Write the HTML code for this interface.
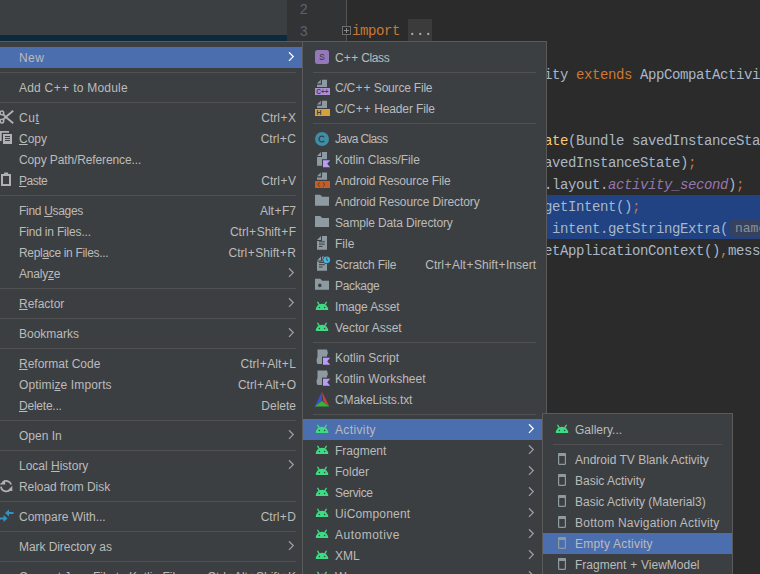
<!DOCTYPE html>
<html><head><meta charset="utf-8"><style>
html,body{margin:0;padding:0;width:760px;height:574px;overflow:hidden;background:#2B2B2B;position:relative}
body{font-family:"Liberation Sans",sans-serif}
.ln{position:absolute;left:287px;width:21px;text-align:right;height:22px;line-height:22px;font-family:"Liberation Mono",monospace;font-size:14px;color:#606366;padding-top:2px}
.code{position:absolute;left:352px;height:22px;line-height:22px;white-space:pre;font-family:"Liberation Mono",monospace;font-size:14px;letter-spacing:-0.4px;color:#A9B7C6;padding-top:1px}
.menu{position:absolute;background:#3C3F41;border:1px solid #5A5A5A;overflow:hidden}
.it{position:absolute;height:21px;line-height:21px;padding-top:1px;font-size:12px;color:#BBBBBB;white-space:nowrap}
.sc{position:absolute;height:21px;line-height:21px;padding-top:1px;font-size:12px;color:#BBBBBB;white-space:nowrap}
.sep{position:absolute;height:1px;background:#515151}
.hl{position:absolute;height:21px;background:#4B6EAF}
.arr{position:absolute}
.p{margin:0 0.5px}
u{text-decoration:underline;text-underline-offset:1px}
#icons{position:absolute;left:0;top:0;z-index:100}
</style></head><body>
<div style="position:absolute;left:0;top:0;width:287px;height:41px;background:#3C3F41"></div><div style="position:absolute;left:0;top:35px;width:287px;height:6px;background:#0D293E"></div><div style="position:absolute;left:287px;top:0;width:60px;height:574px;background:#313335"></div><div style="position:absolute;left:346px;top:0;width:1px;height:574px;background:#555555"></div><div class="ln" style="top:-3px">2</div><div class="ln" style="top:19px">3</div><div style="position:absolute;left:408px;top:19px;width:24px;height:22px;background:#3B3B3B"></div><div style="position:absolute;left:347px;top:195px;width:413px;height:44px;background:#214283"></div><div class="code" style="top:19px"><span style="color:#CC7832">import</span> <span style="color:#A9B7C6">...</span></div><div class="code" style="top:63px"><span style="color:#CC7832">public class </span><span style="color:#A9B7C6">SecondActivity </span><span style="color:#CC7832">extends </span><span style="color:#A9B7C6">AppCompatActivity {</span></div><div class="code" style="top:107px"><span style="color:#BBB529">    @Override</span></div><div class="code" style="top:129px"><span style="color:#CC7832">    protected void </span><span style="color:#FFC66D">onCreate</span><span style="color:#A9B7C6">(Bundle savedInstanceState) {</span></div><div class="code" style="top:151px"><span style="color:#CC7832">        super</span><span style="color:#A9B7C6">.onCreate(savedInstanceState)</span><span style="color:#CC7832">;</span></div><div class="code" style="top:173px"><span style="color:#A9B7C6">        setContentView(R.layout.</span><span style="color:#9876AA;font-style:italic">activity_second</span><span style="color:#A9B7C6">)</span><span style="color:#CC7832">;</span></div><div class="code" style="top:195px"><span style="color:#A9B7C6">        Intent intent = getIntent()</span><span style="color:#CC7832">;</span></div><div class="code" style="top:217px"><span style="color:#A9B7C6">        String message = intent.getStringExtra(</span></div><div class="code" style="top:239px"><span style="color:#A9B7C6">        Toast.makeText(getApplicationContext()</span><span style="color:#CC7832">,</span><span style="color:#A9B7C6">message</span></div><div style="position:absolute;left:730px;top:219px;width:40px;height:18px;border-radius:5px;background:#35425F"></div><div style="position:absolute;left:735px;top:220px;height:18px;line-height:18px;font-family:'Liberation Mono',monospace;font-size:13px;color:#8E9196;white-space:pre">name:</div><div style="position:absolute;left:342px;top:26px;width:7px;height:7px;border:1px solid #6E6E6E;background:#2B2B2B"></div><div style="position:absolute;left:344px;top:30px;width:5px;height:1px;background:#8A8A8A"></div><div style="position:absolute;left:346px;top:28px;width:1px;height:5px;background:#8A8A8A"></div><div class="menu" style="left:-20px;top:41px;width:325px;height:543px;z-index:10"><div class="hl" style="left:0;top:5px;width:327px"></div><div class="it" style="left:38px;top:5px;letter-spacing:0.450px">New</div><svg class="arr" style="left:307px;top:10px" width="7" height="10" viewBox="0 0 7 10"><path d="M1 0.3 L5.2 4.6 L1 8.9" fill="none" stroke="#FFFFFF" stroke-width="1.3"/></svg><div class="sep" style="left:9px;top:30px;width:306px"></div><div class="it" style="left:38px;top:35px;letter-spacing:0.200px">Add C<span class="p">+</span><span class="p">+</span> to Module</div><div class="sep" style="left:9px;top:60px;width:306px"></div><div class="it" style="left:38px;top:65px;letter-spacing:0.550px">Cu<u>t</u></div><div class="sc" style="right:10px;top:65px">Ctrl<span class="p">+</span>X</div><div class="it" style="left:38px;top:86px;letter-spacing:0.000px"><u>C</u>opy</div><div class="sc" style="right:10px;top:86px">Ctrl<span class="p">+</span>C</div><div class="it" style="left:38px;top:107px;letter-spacing:-0.114px">Copy Path/Reference...</div><div class="it" style="left:38px;top:128px;letter-spacing:-0.500px"><u>P</u>aste</div><div class="sc" style="right:10px;top:128px">Ctrl<span class="p">+</span>V</div><div class="sep" style="left:9px;top:153px;width:306px"></div><div class="it" style="left:38px;top:158px;letter-spacing:-0.310px">Find <u>U</u>sages</div><div class="sc" style="right:10px;top:158px">Alt<span class="p">+</span>F7</div><div class="it" style="left:38px;top:179px;letter-spacing:-0.173px">Find in Files...</div><div class="sc" style="right:10px;top:179px">Ctrl<span class="p">+</span>Shift<span class="p">+</span>F</div><div class="it" style="left:38px;top:200px;letter-spacing:-0.328px">Repl<u>a</u>ce in Files...</div><div class="sc" style="right:10px;top:200px">Ctrl<span class="p">+</span>Shift<span class="p">+</span>R</div><div class="it" style="left:38px;top:221px;letter-spacing:-0.200px">Analy<u>z</u>e</div><svg class="arr" style="left:307px;top:226px" width="7" height="10" viewBox="0 0 7 10"><path d="M1 0.3 L5.2 4.6 L1 8.9" fill="none" stroke="#9DA0A8" stroke-width="1.3"/></svg><div class="sep" style="left:9px;top:246px;width:306px"></div><div class="it" style="left:38px;top:251px;letter-spacing:0.000px"><u>R</u>efactor</div><svg class="arr" style="left:307px;top:256px" width="7" height="10" viewBox="0 0 7 10"><path d="M1 0.3 L5.2 4.6 L1 8.9" fill="none" stroke="#9DA0A8" stroke-width="1.3"/></svg><div class="sep" style="left:9px;top:276px;width:306px"></div><div class="it" style="left:38px;top:281px;letter-spacing:0.000px">Bookmarks</div><svg class="arr" style="left:307px;top:286px" width="7" height="10" viewBox="0 0 7 10"><path d="M1 0.3 L5.2 4.6 L1 8.9" fill="none" stroke="#9DA0A8" stroke-width="1.3"/></svg><div class="sep" style="left:9px;top:306px;width:306px"></div><div class="it" style="left:38px;top:311px;letter-spacing:0.000px"><u>R</u>eformat Code</div><div class="sc" style="right:10px;top:311px">Ctrl<span class="p">+</span>Alt<span class="p">+</span>L</div><div class="it" style="left:38px;top:332px;letter-spacing:0.127px">Optimi<u>z</u>e Imports</div><div class="sc" style="right:10px;top:332px">Ctrl<span class="p">+</span>Alt<span class="p">+</span>O</div><div class="it" style="left:38px;top:353px;letter-spacing:-0.225px"><u>D</u>elete...</div><div class="sc" style="right:10px;top:353px">Delete</div><div class="sep" style="left:9px;top:378px;width:306px"></div><div class="it" style="left:38px;top:383px;letter-spacing:0.000px">Open In</div><svg class="arr" style="left:307px;top:388px" width="7" height="10" viewBox="0 0 7 10"><path d="M1 0.3 L5.2 4.6 L1 8.9" fill="none" stroke="#9DA0A8" stroke-width="1.3"/></svg><div class="sep" style="left:9px;top:408px;width:306px"></div><div class="it" style="left:38px;top:413px;letter-spacing:0.000px">Local <u>H</u>istory</div><svg class="arr" style="left:307px;top:418px" width="7" height="10" viewBox="0 0 7 10"><path d="M1 0.3 L5.2 4.6 L1 8.9" fill="none" stroke="#9DA0A8" stroke-width="1.3"/></svg><div class="it" style="left:38px;top:434px;letter-spacing:-0.060px">Reload from Disk</div><div class="sep" style="left:9px;top:459px;width:306px"></div><div class="it" style="left:38px;top:464px;letter-spacing:0.000px">Compare With...</div><div class="sc" style="right:10px;top:464px">Ctrl<span class="p">+</span>D</div><div class="sep" style="left:9px;top:489px;width:306px"></div><div class="it" style="left:38px;top:494px;letter-spacing:-0.069px">Mark Directory as</div><svg class="arr" style="left:307px;top:499px" width="7" height="10" viewBox="0 0 7 10"><path d="M1 0.3 L5.2 4.6 L1 8.9" fill="none" stroke="#9DA0A8" stroke-width="1.3"/></svg><div class="sep" style="left:9px;top:519px;width:306px"></div><div class="it" style="left:38px;top:524px;letter-spacing:0.000px">Convert Java File to Kotlin File</div><div class="sc" style="right:10px;top:524px">Ctrl<span class="p">+</span>Alt<span class="p">+</span>Shift<span class="p">+</span>K</div></div><div class="menu" style="left:302px;top:41px;width:243px;height:543px;z-index:20"><div class="it" style="left:32px;top:5px;letter-spacing:-0.425px">C<span class="p">+</span><span class="p">+</span> Class</div><div class="sep" style="left:10px;top:30px;width:223px"></div><div class="it" style="left:32px;top:35px;letter-spacing:-0.200px">C/C<span class="p">+</span><span class="p">+</span> Source File</div><div class="it" style="left:32px;top:56px;letter-spacing:-0.138px">C/C<span class="p">+</span><span class="p">+</span> Header File</div><div class="sep" style="left:10px;top:81px;width:223px"></div><div class="it" style="left:32px;top:86px;letter-spacing:-0.644px">Java Class</div><div class="it" style="left:32px;top:107px;letter-spacing:-0.075px">Kotlin Class/File</div><div class="it" style="left:32px;top:128px;letter-spacing:-0.155px">Android Resource File</div><div class="it" style="left:32px;top:149px;letter-spacing:-0.108px">Android Resource Directory</div><div class="it" style="left:32px;top:170px;letter-spacing:-0.145px">Sample Data Directory</div><div class="it" style="left:32px;top:191px;letter-spacing:0.000px">File</div><div class="it" style="left:32px;top:212px;letter-spacing:-0.164px">Scratch File</div><div class="sc" style="right:10px;top:212px">Ctrl<span class="p">+</span>Alt<span class="p">+</span>Shift<span class="p">+</span>Insert</div><div class="it" style="left:32px;top:233px;letter-spacing:-0.333px">Package</div><div class="it" style="left:32px;top:254px;letter-spacing:-0.140px">Image Asset</div><div class="it" style="left:32px;top:275px;letter-spacing:0.000px">Vector Asset</div><div class="sep" style="left:10px;top:300px;width:223px"></div><div class="it" style="left:32px;top:305px;letter-spacing:0.000px">Kotlin Script</div><div class="it" style="left:32px;top:326px;letter-spacing:0.000px">Kotlin Worksheet</div><div class="it" style="left:32px;top:347px;letter-spacing:-0.100px">CMakeLists.txt</div><div class="sep" style="left:10px;top:372px;width:223px"></div><div class="hl" style="left:0;top:377px;width:245px"></div><div class="it" style="left:32px;top:377px;letter-spacing:0.371px">Activity</div><svg class="arr" style="left:225px;top:382px" width="7" height="10" viewBox="0 0 7 10"><path d="M1 0.3 L5.2 4.6 L1 8.9" fill="none" stroke="#FFFFFF" stroke-width="1.3"/></svg><div class="it" style="left:32px;top:398px;letter-spacing:0.000px">Fragment</div><svg class="arr" style="left:225px;top:403px" width="7" height="10" viewBox="0 0 7 10"><path d="M1 0.3 L5.2 4.6 L1 8.9" fill="none" stroke="#9DA0A8" stroke-width="1.3"/></svg><div class="it" style="left:32px;top:419px;letter-spacing:0.000px">Folder</div><svg class="arr" style="left:225px;top:424px" width="7" height="10" viewBox="0 0 7 10"><path d="M1 0.3 L5.2 4.6 L1 8.9" fill="none" stroke="#9DA0A8" stroke-width="1.3"/></svg><div class="it" style="left:32px;top:440px;letter-spacing:-0.333px">Service</div><svg class="arr" style="left:225px;top:445px" width="7" height="10" viewBox="0 0 7 10"><path d="M1 0.3 L5.2 4.6 L1 8.9" fill="none" stroke="#9DA0A8" stroke-width="1.3"/></svg><div class="it" style="left:32px;top:461px;letter-spacing:0.170px">UiComponent</div><svg class="arr" style="left:225px;top:466px" width="7" height="10" viewBox="0 0 7 10"><path d="M1 0.3 L5.2 4.6 L1 8.9" fill="none" stroke="#9DA0A8" stroke-width="1.3"/></svg><div class="it" style="left:32px;top:482px;letter-spacing:0.500px">Automotive</div><svg class="arr" style="left:225px;top:487px" width="7" height="10" viewBox="0 0 7 10"><path d="M1 0.3 L5.2 4.6 L1 8.9" fill="none" stroke="#9DA0A8" stroke-width="1.3"/></svg><div class="it" style="left:32px;top:503px;letter-spacing:0.000px">XML</div><svg class="arr" style="left:225px;top:508px" width="7" height="10" viewBox="0 0 7 10"><path d="M1 0.3 L5.2 4.6 L1 8.9" fill="none" stroke="#9DA0A8" stroke-width="1.3"/></svg><div class="it" style="left:32px;top:524px;letter-spacing:0.000px">Wear</div><svg class="arr" style="left:225px;top:529px" width="7" height="10" viewBox="0 0 7 10"><path d="M1 0.3 L5.2 4.6 L1 8.9" fill="none" stroke="#9DA0A8" stroke-width="1.3"/></svg></div><div class="menu" style="left:542px;top:413px;width:189px;height:171px;z-index:30"><div class="it" style="left:32px;top:5px;letter-spacing:0.000px">Gallery...</div><div class="sep" style="left:10px;top:30px;width:169px"></div><div class="it" style="left:32px;top:35px;letter-spacing:0.000px">Android TV Blank Activity</div><div class="it" style="left:32px;top:56px;letter-spacing:0.000px">Basic Activity</div><div class="it" style="left:32px;top:77px;letter-spacing:0.000px">Basic Activity (Material3)</div><div class="it" style="left:32px;top:98px;letter-spacing:0.224px">Bottom Navigation Activity</div><div class="hl" style="left:0;top:119px;width:191px"></div><div class="it" style="left:32px;top:119px;letter-spacing:0.223px">Empty Activity</div><div class="it" style="left:32px;top:140px;letter-spacing:0.000px">Fragment <span class="p">+</span> ViewModel</div></div>
<svg id="icons" width="760" height="574" viewBox="0 0 760 574"><g fill="none" stroke="#AFB1B3"><circle cx="1.9" cy="112.9" r="1.8" stroke-width="1.5"/><circle cx="1.9" cy="121.1" r="1.8" stroke-width="1.5"/><path stroke-width="1.8" d="M3.2 114.4 L5.8 117 L13.2 123.2 M3.2 119.6 L5.8 117 L13.2 110.8"/></g><path d="M0 131 H9 V132.7 H1.7 V141 H0 Z" fill="#AFB1B3"/><rect x="3" y="134" width="9" height="10" fill="#AFB1B3"/><rect x="5" y="136" width="5" height="1" fill="#3C3F41"/><rect x="5" y="138" width="5" height="1" fill="#3C3F41"/><rect x="5" y="140" width="5" height="1" fill="#3C3F41"/><rect x="2" y="175" width="8" height="10" fill="none" stroke="#AFB1B3" stroke-width="2"/><rect x="4" y="172.6" width="4.2" height="2.6" rx="0.8" fill="#AFB1B3"/><g transform="translate(0,-0.8)"><g fill="none" stroke="#AFB1B3" stroke-width="1.7"><path d="M11.2 485.3 A5.2 5.2 0 0 0 2.6 483.2"/><path d="M1 487.4 A5.2 5.2 0 0 0 10.4 490"/></g><path d="M-0.4 485.2 L5.2 485.2 L5.2 480.6 Z" fill="#AFB1B3"/><path d="M12.3 486.6 L12.3 491.9 L7.2 491.9 Z" fill="#AFB1B3"/></g><path d="M5 513 L9 509.5 L9 511.9 H13.5 V514.1 H9 V516.5 Z" fill="#3592C4"/><path d="M7.5 518.5 L3.5 522 L3.5 519.6 H-1 V517.4 H3.5 V515 Z" fill="#3592C4"/><rect x="315" y="50" width="14" height="14" rx="2.5" fill="#9478BA"/><text x="322" y="60" text-anchor="middle" font-family="Liberation Sans" font-size="8.2" fill="#3A3340">S</text><path d="M317 83.5 L320.8 79.8 L320.8 83.5 Z" fill="#8E9AA1"/><path d="M322 79.8 H327 V87.0 H317 V84.8 H322 Z" fill="#8E9AA1"/><rect x="315" y="88" width="15" height="7" fill="#A98ED8"/><text x="322.5" y="94" text-anchor="middle" font-family="Liberation Sans" font-weight="bold" font-size="6.5" fill="#3C3F41">C++</text><path d="M317 104.5 L320.8 100.8 L320.8 104.5 Z" fill="#8E9AA1"/><path d="M322 100.8 H327 V108.0 H317 V105.8 H322 Z" fill="#8E9AA1"/><rect x="315" y="109" width="15" height="7" fill="#D8A13A"/><text x="316.5" y="115.2" font-family="Liberation Sans" font-weight="bold" font-size="6.8" fill="#3C3F41">H</text><circle cx="322" cy="139" r="7" fill="#3D8EA6"/><path d="M324.2 137.2 A2.9 2.9 0 1 0 324.2 140.8" fill="none" stroke="#3C3F41" stroke-width="1.3"/><path d="M317 156 L321 152 L321 156 Z" fill="#8E9AA1"/><path d="M322 152 H327 V165.7 H317 V157 H322 Z" fill="#8E9AA1"/><rect x="322" y="159.2" width="9" height="9" fill="#3C3F41"/><path d="M323 160.2 H330.2 L327.2 163.7 L330.2 167.2 H323 Z" fill="#B99BF8"/><path d="M317 176.29999999999998 L320.8 172.6 L320.8 176.29999999999998 Z" fill="#8E9AA1"/><path d="M322 172.6 H327 V179.79999999999998 H317 V177.6 H322 Z" fill="#8E9AA1"/><rect x="315" y="181" width="15" height="7" fill="#C65D27"/><path d="M320 182.4 L317.8 184.5 L320 186.6 M322.8 182.4 L325 184.5 L322.8 186.6" fill="none" stroke="#3C3F41" stroke-width="0.9"/><path d="M315 194.8 H320.2 L322.2 196.7 H329 V205.8 H315 Z" fill="#8E9AA1"/><path d="M315 216.0 H320.2 L322.2 217.89999999999998 H329 V227.0 H315 Z" fill="#8E9AA1"/><path d="M317 240 L321 236 L321 240 Z" fill="#8E9AA1"/><path d="M322 236 H327 V249.7 H317 V241 H322 Z" fill="#8E9AA1"/><rect x="319" y="241.3" width="5.8" height="1" fill="#3C3F41"/><rect x="319" y="243.6" width="5.8" height="1" fill="#3C3F41"/><rect x="319" y="245.9" width="3.6" height="1" fill="#3C3F41"/><path d="M317 260.6 L321 256.6 L321 260.6 Z" fill="#8E9AA1"/><path d="M322 256.6 H327 V270.8 H317 V261.6 H322 Z" fill="#8E9AA1"/><rect x="319" y="261.90000000000003" width="5.8" height="1" fill="#3C3F41"/><rect x="319" y="264.20000000000005" width="5.8" height="1" fill="#3C3F41"/><rect x="319" y="266.5" width="3.6" height="1" fill="#3C3F41"/><circle cx="326.7" cy="259.8" r="4.3" fill="#3C3F41"/><circle cx="326.7" cy="259.8" r="3.4" fill="#40B6E0"/><path d="M326.7 257.6 V260 L328 261" fill="none" stroke="#3C3F41" stroke-width="0.9"/><path d="M315 278.8 H320.2 L322.2 280.7 H329 V289.8 H315 Z" fill="#8E9AA1"/><circle cx="319.8" cy="285.4" r="1.8" fill="#3C3F41"/><path d="M315.8 310 A6.2 6.2 0 0 1 328.2 310 Z" fill="#3DDC84"/><path d="M317.8 302.3 L319.4 305 M326.2 302.3 L324.6 305" stroke="#3DDC84" stroke-width="1.4" stroke-linecap="round"/><circle cx="319.4" cy="307.5" r="0.75" fill="#3C3F41"/><circle cx="324.6" cy="307.5" r="0.75" fill="#3C3F41"/><path d="M315.8 331 A6.2 6.2 0 0 1 328.2 331 Z" fill="#3DDC84"/><path d="M317.8 323.3 L319.4 326 M326.2 323.3 L324.6 326" stroke="#3DDC84" stroke-width="1.4" stroke-linecap="round"/><circle cx="319.4" cy="328.5" r="0.75" fill="#3C3F41"/><circle cx="324.6" cy="328.5" r="0.75" fill="#3C3F41"/><path d="M317.5 349.6 H327 Q328.5 352.6 327 355.6 V364.1 H317.5 Q315.6 360.6 317.5 357.1 Z" fill="#8E9AA1"/><rect x="322" y="356.6" width="9" height="9" fill="#3C3F41"/><path d="M323 357.70000000000005 H330.2 L327.2 361.20000000000005 L330.2 364.70000000000005 H323 Z" fill="#B99BF8"/><path d="M317.5 370.6 H327 Q328.5 373.6 327 376.6 V385.1 H317.5 Q315.6 381.6 317.5 378.1 Z" fill="#8E9AA1"/><rect x="322" y="377.6" width="9" height="9" fill="#3C3F41"/><path d="M323 378.70000000000005 H330.2 L327.2 382.20000000000005 L330.2 385.70000000000005 H323 Z" fill="#B99BF8"/><path d="M322 391.8 L314.7 406.4 L322 401 Z" fill="#3E4FC7"/><path d="M322 391.8 L329.3 406.4 L323.5 401.5 Z" fill="#D63B3B"/><path d="M314.7 406.4 L329.3 406.4 L322 401 Z" fill="#35B53A"/><path d="M315.8 433 A6.2 6.2 0 0 1 328.2 433 Z" fill="#3DDC84"/><path d="M317.8 425.3 L319.4 428 M326.2 425.3 L324.6 428" stroke="#3DDC84" stroke-width="1.4" stroke-linecap="round"/><circle cx="319.4" cy="430.5" r="0.75" fill="#3C3F41"/><circle cx="324.6" cy="430.5" r="0.75" fill="#3C3F41"/><path d="M315.8 454 A6.2 6.2 0 0 1 328.2 454 Z" fill="#3DDC84"/><path d="M317.8 446.3 L319.4 449 M326.2 446.3 L324.6 449" stroke="#3DDC84" stroke-width="1.4" stroke-linecap="round"/><circle cx="319.4" cy="451.5" r="0.75" fill="#3C3F41"/><circle cx="324.6" cy="451.5" r="0.75" fill="#3C3F41"/><path d="M315.8 475 A6.2 6.2 0 0 1 328.2 475 Z" fill="#3DDC84"/><path d="M317.8 467.3 L319.4 470 M326.2 467.3 L324.6 470" stroke="#3DDC84" stroke-width="1.4" stroke-linecap="round"/><circle cx="319.4" cy="472.5" r="0.75" fill="#3C3F41"/><circle cx="324.6" cy="472.5" r="0.75" fill="#3C3F41"/><path d="M315.8 496 A6.2 6.2 0 0 1 328.2 496 Z" fill="#3DDC84"/><path d="M317.8 488.3 L319.4 491 M326.2 488.3 L324.6 491" stroke="#3DDC84" stroke-width="1.4" stroke-linecap="round"/><circle cx="319.4" cy="493.5" r="0.75" fill="#3C3F41"/><circle cx="324.6" cy="493.5" r="0.75" fill="#3C3F41"/><path d="M315.8 517 A6.2 6.2 0 0 1 328.2 517 Z" fill="#3DDC84"/><path d="M317.8 509.3 L319.4 512 M326.2 509.3 L324.6 512" stroke="#3DDC84" stroke-width="1.4" stroke-linecap="round"/><circle cx="319.4" cy="514.5" r="0.75" fill="#3C3F41"/><circle cx="324.6" cy="514.5" r="0.75" fill="#3C3F41"/><path d="M315.8 538 A6.2 6.2 0 0 1 328.2 538 Z" fill="#3DDC84"/><path d="M317.8 530.3 L319.4 533 M326.2 530.3 L324.6 533" stroke="#3DDC84" stroke-width="1.4" stroke-linecap="round"/><circle cx="319.4" cy="535.5" r="0.75" fill="#3C3F41"/><circle cx="324.6" cy="535.5" r="0.75" fill="#3C3F41"/><path d="M315.8 559 A6.2 6.2 0 0 1 328.2 559 Z" fill="#3DDC84"/><path d="M317.8 551.3 L319.4 554 M326.2 551.3 L324.6 554" stroke="#3DDC84" stroke-width="1.4" stroke-linecap="round"/><circle cx="319.4" cy="556.5" r="0.75" fill="#3C3F41"/><circle cx="324.6" cy="556.5" r="0.75" fill="#3C3F41"/><path d="M315.8 580 A6.2 6.2 0 0 1 328.2 580 Z" fill="#3DDC84"/><path d="M317.8 572.3 L319.4 575 M326.2 572.3 L324.6 575" stroke="#3DDC84" stroke-width="1.4" stroke-linecap="round"/><circle cx="319.4" cy="577.5" r="0.75" fill="#3C3F41"/><circle cx="324.6" cy="577.5" r="0.75" fill="#3C3F41"/><path d="M555.8 433 A6.2 6.2 0 0 1 568.2 433 Z" fill="#3DDC84"/><path d="M557.8 425.3 L559.4 428 M566.2 425.3 L564.6 428" stroke="#3DDC84" stroke-width="1.4" stroke-linecap="round"/><circle cx="559.4" cy="430.5" r="0.75" fill="#3C3F41"/><circle cx="564.6" cy="430.5" r="0.75" fill="#3C3F41"/><rect x="558.6" y="453.6" width="6.8" height="10.8" rx="1" fill="none" stroke="#8E9AA1" stroke-width="1.2"/><rect x="558" y="453" width="8" height="3" rx="1" fill="#8E9AA1"/><rect x="558.6" y="474.6" width="6.8" height="10.8" rx="1" fill="none" stroke="#8E9AA1" stroke-width="1.2"/><rect x="558" y="474" width="8" height="3" rx="1" fill="#8E9AA1"/><rect x="558.6" y="495.6" width="6.8" height="10.8" rx="1" fill="none" stroke="#8E9AA1" stroke-width="1.2"/><rect x="558" y="495" width="8" height="3" rx="1" fill="#8E9AA1"/><rect x="558.6" y="516.6" width="6.8" height="10.8" rx="1" fill="none" stroke="#8E9AA1" stroke-width="1.2"/><rect x="558" y="516" width="8" height="3" rx="1" fill="#8E9AA1"/><rect x="558.6" y="537.6" width="6.8" height="10.8" rx="1" fill="none" stroke="#8E9AA1" stroke-width="1.2"/><rect x="558" y="537" width="8" height="3" rx="1" fill="#8E9AA1"/><rect x="558.6" y="558.6" width="6.8" height="10.8" rx="1" fill="none" stroke="#8E9AA1" stroke-width="1.2"/><rect x="558" y="558" width="8" height="3" rx="1" fill="#8E9AA1"/></svg>
</body></html>
